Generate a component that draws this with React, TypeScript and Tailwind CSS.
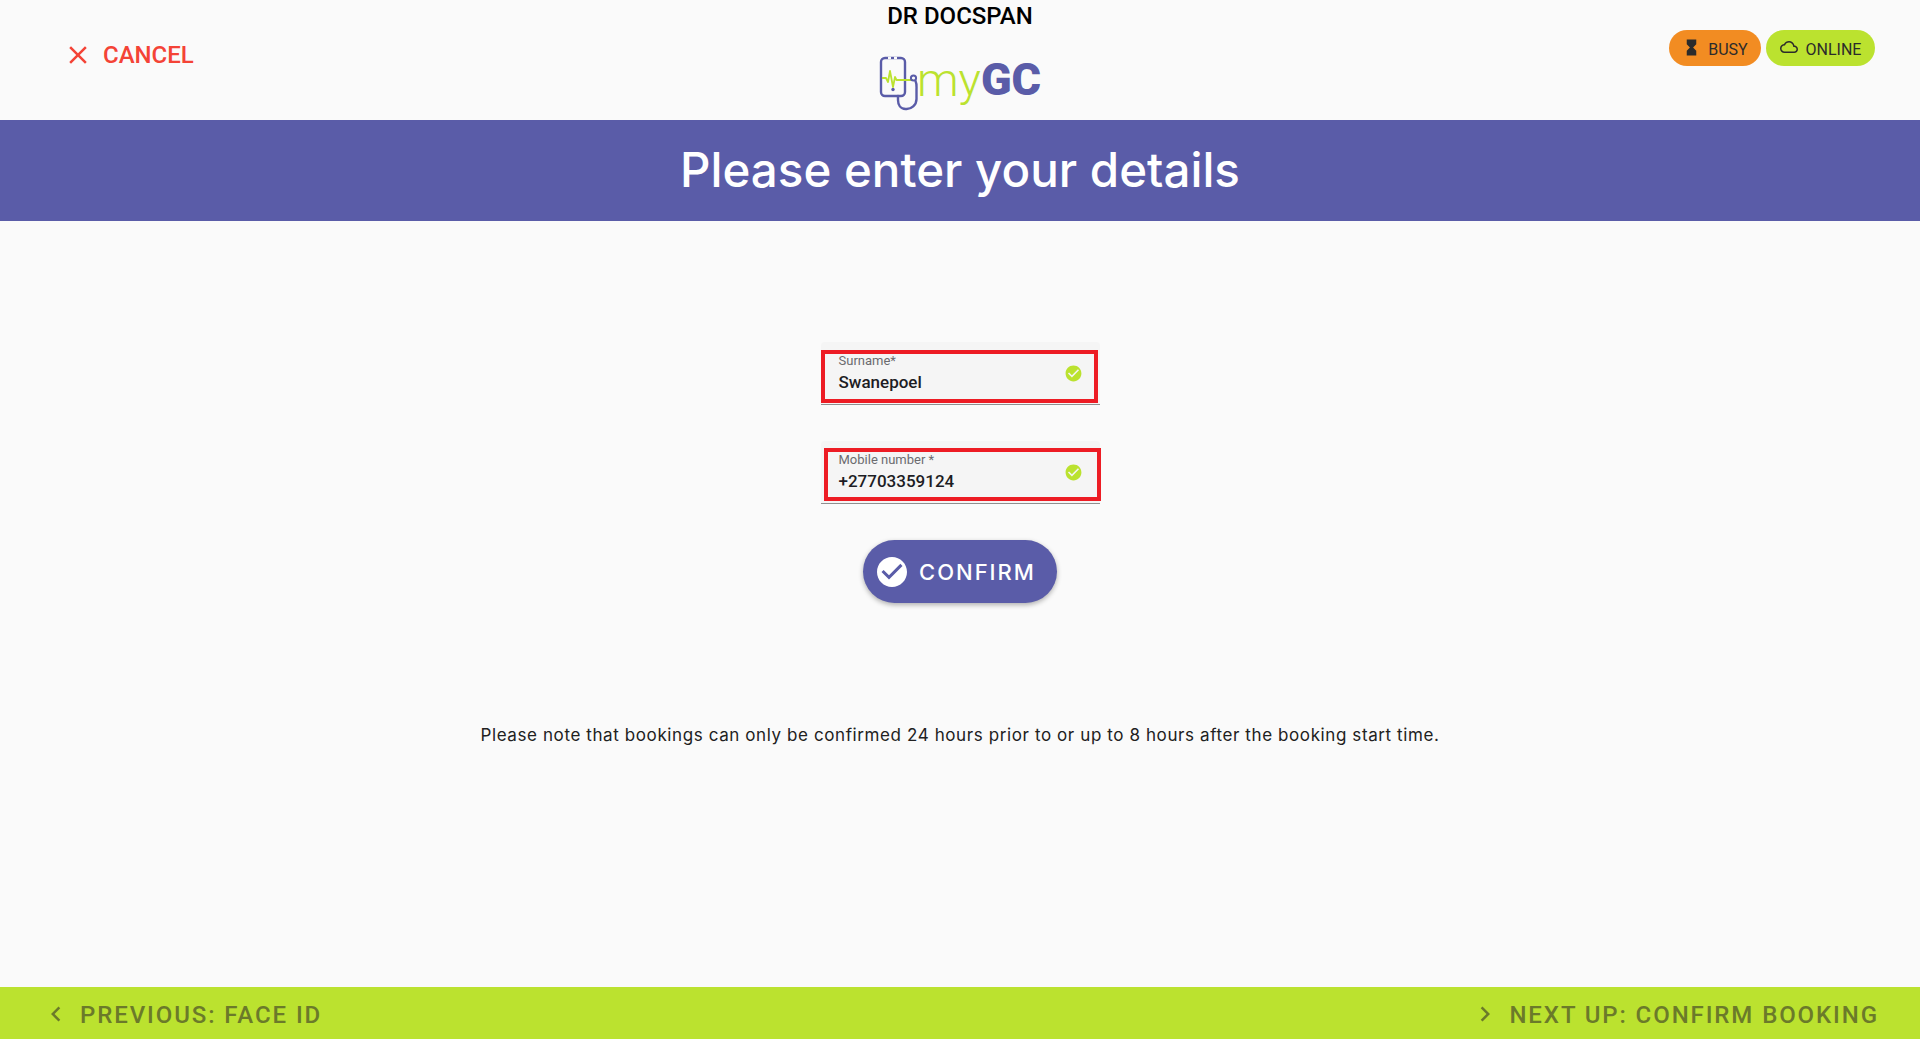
const ROBOTO = "font-['Roboto',sans-serif]";
const HEADING = "font-['Inter','Noto_Sans',sans-serif]";

// material icons, the lucide ones are too thin next to the reference
function MaterialIcon({ d, className }: { d: string; className: string }) {
  return (
    <svg viewBox="0 0 24 24" fill="currentColor" className={className} aria-hidden>
      <path d={d} />
    </svg>
  );
}

const ICON_CLOSE =
  "M19 6.41L17.59 5 12 10.59 6.41 5 5 6.41 10.59 12 5 17.59 6.41 19 12 13.41 17.59 19 19 17.59 13.41 12z";
const ICON_HOURGLASS = "M6 2v6h.01L6 8.01 10 12l-4 4 .01.01H6V22h12v-5.99h-.01L18 16l-4-4 4-3.99-.01-.01H18V2H6z";
const ICON_CLOUD =
  "M19.35 10.04C18.67 6.59 15.64 4 12 4 9.11 4 6.6 5.64 5.35 8.04 2.34 8.36 0 10.91 0 14c0 3.31 2.69 6 6 6h13c2.76 0 5-2.24 5-5 0-2.64-2.05-4.78-4.65-4.96zM19 18H6c-2.21 0-4-1.79-4-4 0-2.05 1.53-3.76 3.56-3.97l1.07-.11.5-.95C8.08 7.14 9.94 6 12 6c2.62 0 4.88 1.86 5.39 4.43l.3 1.5 1.53.11c1.56.1 2.78 1.41 2.78 2.96 0 1.65-1.35 3-3 3z";
const ICON_CHECK_CIRCLE =
  "M12 2C6.48 2 2 6.48 2 12s4.48 10 10 10 10-4.48 10-10S17.52 2 12 2zm-2 15l-5-5 1.41-1.41L10 14.17l7.59-7.59L19 8l-9 9z";
const ICON_CHEVRON_LEFT = "M15.41 7.41L14 6l-6 6 6 6 1.41-1.41L10.83 12z";
const ICON_CHEVRON_RIGHT = "M10 6L8.59 7.41 13.17 12l-4.58 4.59L10 18l6-6z";

function LogoMark() {
  return (
    <svg viewBox="0 0 46 58" className="h-[58px] w-[46px]" fill="none" aria-hidden>
      <rect x="2" y="2" width="24" height="38" rx="4" stroke="#5a5ca8" strokeWidth="2.400" />
      <path d="M9 2h3M15 2h3" stroke="#fafafa" strokeWidth="2.600" />
      <circle cx="14" cy="33.5" r="1.7" fill="#5a5ca8" />
      <path d="M3 22h4l2 4 2-11 3 16 2-10 1.500 3H34" stroke="#bbe22f" strokeWidth="1.800" strokeLinejoin="round" />
      <circle cx="34.500" cy="22" r="2.600" stroke="#5a5ca8" strokeWidth="2" />
      <path d="M36.500 25c1.500 3 1 5 1 9v9a10 10 0 0 1-11 10c-5 0-7.500-4-7.500-9v-4" stroke="#5a5ca8" strokeWidth="2.400" strokeLinecap="round" />
    </svg>
  );
}

function Field({ label, value, outline }: { label: string; value: string; outline: string }) {
  return (
    <div className="relative h-[63px] w-[279px] rounded-t border-b-[1.500px] border-[#8f8f8f] bg-[#f5f5f5] pl-[18px] pr-[17px]">
      <div className="flex h-full items-center justify-between">
        <div>
          <div className="text-[13px] leading-[14px] text-[#6b6b6f]">{label}</div>
          <div className="mt-[4px] text-[17px] leading-[20px] font-medium text-[#1d1d24]">{value}</div>
        </div>
        <MaterialIcon d={ICON_CHECK_CIRCLE} className="h-[19px] w-[19px] text-[#bbe22f]" />
      </div>
      {/* red annotation box sits on top of the field */}
      <div className={`absolute h-[53px] w-[277px] border-[4px] border-[#ed1c24] ${outline}`} />
    </div>
  );
}

export default function App() {
  return (
    <div className={`flex h-[1039px] flex-col overflow-hidden bg-[#fafafa] ${ROBOTO}`}>
      <header className="flex h-[120px] shrink-0 justify-between">
        <div className="flex h-[70px] w-[260px] items-center gap-[10px] pl-[63px] pt-[40px] text-[#f44336]">
          <MaterialIcon d={ICON_CLOSE} className="h-[30px] w-[30px]" />
          <span className="text-[24px] leading-[28px] font-medium">CANCEL</span>
        </div>
        <div className="flex flex-col items-center">
          <div className="pt-[3px] text-[24px] leading-[26px] font-medium text-black">DR DOCSPAN</div>
          <div className="mt-[27px] flex h-[58px] items-start">
            <LogoMark />
            <span className="-ml-[8px] -mt-[2px] text-[47px] leading-[52px] font-light text-[#bbe22f]">my</span>
            <span className="-mt-[2px] text-[45px] leading-[52px] font-black text-[#5a5ca8]">GC</span>
          </div>
        </div>
        <div className="flex w-[260px] items-start justify-end gap-[5px] pr-[45px] pt-[30px] text-[16px] text-[#2b2b2b]">
          <div className="flex h-[36px] w-[92px] items-center justify-center gap-[7px] rounded-full bg-[#f28c22]">
            <MaterialIcon d={ICON_HOURGLASS} className="mb-[2px] h-[19px] w-[19px]" />
            <span className="pt-[3px]">BUSY</span>
          </div>
          <div className="flex h-[36px] w-[109px] items-center justify-center gap-[8px] rounded-full bg-[#bbe22f]">
            <MaterialIcon d={ICON_CLOUD} className="mb-[2px] h-[18px] w-[18px]" />
            <span className="pt-[3px]">ONLINE</span>
          </div>
        </div>
      </header>

      <div className={`flex h-[101px] shrink-0 items-center justify-center bg-[#5a5ca8] pb-[2px] text-[47.500px] font-medium text-white ${HEADING}`}>
        Please enter your details
      </div>

      <main className="flex flex-1 flex-col items-center pt-[121px]">
        <Field label="Surname*" value="Swanepoel" outline="left-0 top-[8px]" />
        <div className="h-[36px]" />
        <Field label="Mobile number *" value="+27703359124" outline="left-[3px] top-[7px]" />
        <button
          type="button"
          className={`mt-[36px] flex h-[63px] w-[194px] items-center gap-[9px] rounded-full bg-[#5a5ca8] pl-[11px] text-[22px] font-medium tracking-[2px] text-white shadow-[0_2px_5px_rgba(0,0,0,0.3)] ${HEADING}`}
        >
          <MaterialIcon d={ICON_CHECK_CIRCLE} className="h-[36px] w-[36px]" />
          <span className="pt-[1px]">CONFIRM</span>
        </button>
        <p className={`mt-[120px] text-[17px] leading-[24px] tracking-[0.6px] text-[#212121] ${HEADING}`}>
          Please note that bookings can only be confirmed 24 hours prior to or up to 8 hours after the booking start time.
        </p>
      </main>

      <footer className="flex h-[52px] shrink-0 items-center justify-between bg-[#bbe22f] pl-[41px] pr-[41px] text-[24px] font-medium tracking-[1.900px] text-[#6b7a2a]">
        <div className="flex items-center gap-[9px]">
          <MaterialIcon d={ICON_CHEVRON_LEFT} className="mt-[2px] h-[30px] w-[30px]" />
          <span className="pt-[3px]">PREVIOUS: FACE ID</span>
        </div>
        <div className="flex items-center gap-[9px]">
          <MaterialIcon d={ICON_CHEVRON_RIGHT} className="mt-[2px] h-[30px] w-[30px]" />
          <span className="pt-[3px]">NEXT UP: CONFIRM BOOKING</span>
        </div>
      </footer>
    </div>
  );
}
